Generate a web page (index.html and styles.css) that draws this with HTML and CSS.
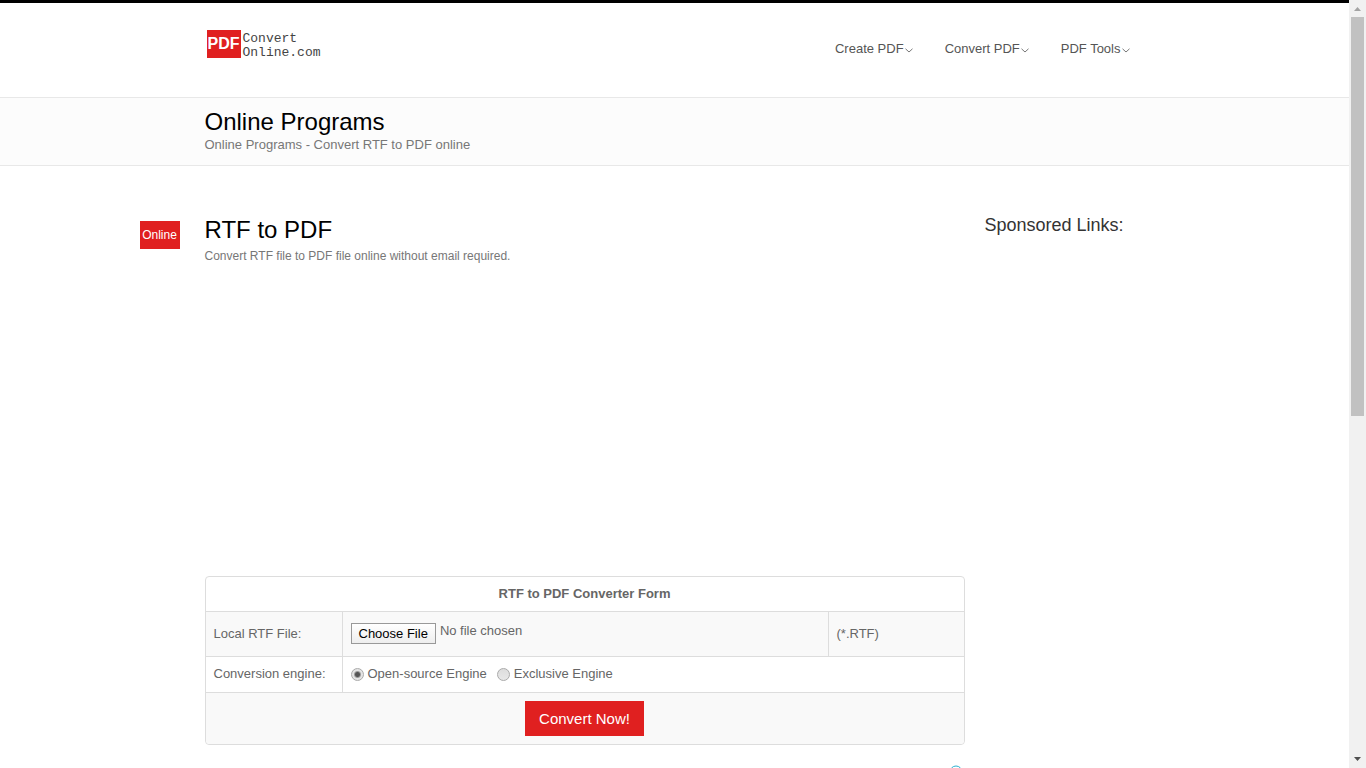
FILE: index.html
```
<!DOCTYPE html>
<html lang="en">
<head>
    <meta charset="UTF-8">
    <meta name="viewport" content="width=device-width, initial-scale=1.0">
    <title>RTF to PDF</title>
    <link rel="stylesheet" href="styles.css">
</head>
<body>
    <div class="page">
        <header class="header">
            <div class="container header-row">
                <a href="#" class="logo">
                    <span class="logo-mark">PDF</span>
                    <span class="logo-text">Convert<br>Online.com</span>
                </a>
                <nav class="nav">
                    <a href="#">Create PDF<svg class="chevron" viewBox="0 0 8 5"><path d="M0.5 0.8L4 4L7.5 0.8"/></svg></a>
                    <a href="#">Convert PDF<svg class="chevron" viewBox="0 0 8 5"><path d="M0.5 0.8L4 4L7.5 0.8"/></svg></a>
                    <a href="#">PDF Tools<svg class="chevron" viewBox="0 0 8 5"><path d="M0.5 0.8L4 4L7.5 0.8"/></svg></a>
                </nav>
            </div>
        </header>

        <div class="title-bar">
            <div class="container">
                <h1>Online Programs</h1>
                <p>Online Programs - Convert RTF to PDF online</p>
            </div>
        </div>

        <div class="container content">
            <main class="main">
                <div class="post-head">
                    <span class="badge">Online</span>
                    <div>
                        <h2>RTF to PDF</h2>
                        <p>Convert RTF file to PDF file online without email required.</p>
                    </div>
                </div>
                <div class="ad-space"></div>
                <form>
                    <table class="form-table">
                        <tr>
                            <th colspan="3">RTF to PDF Converter Form</th>
                        </tr>
                        <tr class="file-row">
                            <td class="col-label"><label for="file">Local RTF File:</label></td>
                            <td class="col-file"><input type="file" id="file" name="file" accept=".rtf"></td>
                            <td class="col-type">(*.RTF)</td>
                        </tr>
                        <tr class="engine-row">
                            <td>Conversion engine:</td>
                            <td colspan="2">
                                <div class="radios">
                                    <input type="radio" id="open" name="engine" value="open" checked>
                                    <label for="open">Open-source Engine</label>
                                    <input type="radio" id="exclusive" name="engine" value="exclusive">
                                    <label for="exclusive">Exclusive Engine</label>
                                </div>
                            </td>
                        </tr>
                        <tr>
                            <td colspan="3" class="submit-cell"><button type="button">Convert Now!</button></td>
                        </tr>
                    </table>
                </form>
                <div class="ad-mark">
                    <svg viewBox="0 0 14 14"><circle cx="7" cy="7" r="6"/><path d="M7 6v4M7 3.5v1"/></svg>
                </div>
            </main>
            <aside class="sidebar">
                <h3>Sponsored Links:</h3>
            </aside>
        </div>
    </div>

    <div class="scrollbar">
        <svg class="arrow up" viewBox="0 0 7 4"><path d="M0 4L3.5 0L7 4z"/></svg>
        <div class="track"><div class="thumb"></div></div>
        <svg class="arrow down" viewBox="0 0 7 4"><path d="M0 0L3.5 4L7 0z"/></svg>
    </div>
</body>
</html>
```

FILE: styles.css
```
* {
    box-sizing: border-box;
}
body {
    display: flex;
    height: 100vh;
    margin: 0;
    overflow: hidden;
    font-family: "Liberation Sans", Arial, sans-serif;
    font-size: 13px;
    line-height: 20px;
    color: #666;
    background-color: #fff;
}
h1, h2, h3, p {
    margin: 0;
    font-weight: normal;
}
a {
    color: #555;
    text-decoration: none;
}
.page {
    flex: 1;
    overflow: hidden;
    border-top: 3px solid #000;
}
.container {
    max-width: 940px;
    margin: 0 auto;
}

/* header */
.header-row {
    display: flex;
    justify-content: space-between;
    align-items: flex-start;
    height: 94px;
    padding-top: 27px;
}
.logo {
    display: flex;
    gap: 2px;
    padding-left: 2px;
}
.logo-mark {
    width: 34px;
    height: 28px;
    background-color: #e02020;
    color: #fff;
    font-size: 16px;
    font-weight: bold;
    line-height: 28px;
    text-align: center;
}
.logo-text {
    padding-top: 2px;
    font-family: "Liberation Mono", "Courier New", monospace;
    font-size: 13px;
    line-height: 14px;
    color: #444;
}
.nav {
    display: flex;
    gap: 32px;
    padding: 9px 15px 0 0;
}
.chevron {
    width: 8px;
    height: 5px;
    margin-left: 1px;
    vertical-align: 0;
    fill: none;
    stroke: #777;
}

/* title */
.title-bar {
    padding: 10px 0;
    background-color: #fcfcfc;
    border-top: 1px solid #e8e8e8;
    border-bottom: 1px solid #e8e8e8;
}
.title-bar h1 {
    font-size: 24px;
    line-height: 27px;
    color: #000;
}
.title-bar p {
    color: #777;
}

/* content */
.content {
    display: flex;
    gap: 20px;
    padding-top: 48px;
}
.main {
    flex: 1;
}
.post-head {
    display: flex;
    gap: 25px;
    margin-left: -65px;
}
.badge {
    width: 40px;
    height: 28px;
    margin-top: 7px;
    background-color: #e02020;
    color: #fff;
    font-size: 12px;
    line-height: 28px;
    text-align: center;
}
.post-head h2 {
    font-size: 24px;
    line-height: 32px;
    color: #000;
}
.post-head p {
    font-size: 12px;
    color: #777;
}
.ad-space {
    height: 310px;
}
.sidebar {
    width: 160px;
}
.sidebar h3 {
    font-size: 18px;
    line-height: 22px;
    color: #333;
}

/* form */
.form-table {
    width: 100%;
    border: 1px solid #ddd;
    border-radius: 4px;
    border-spacing: 0;
}
.form-table th, .form-table td {
    padding: 7px 8px;
    text-align: left;
}
.form-table th {
    text-align: center;
}
.form-table td {
    border-top: 1px solid #ddd;
}
.form-table td + td {
    border-left: 1px solid #ddd;
}
.form-table tr:nth-child(even) td {
    background-color: #f9f9f9;
}
.form-table .file-row td {
    height: 45px;
}
.form-table .col-file {
    padding-top: 6px;
    padding-bottom: 10px;
}
.form-table .engine-row td {
    height: 36px;
    padding-top: 6px;
    padding-bottom: 8px;
}
.col-label {
    width: 136px;
}
.col-type {
    width: 136px;
}
input[type="file"] {
    display: block;
    width: 100%;
    font: inherit;
    color: #666;
}
input[type="file"]::file-selector-button {
    height: 21px;
    margin: 0 4px 0 0;
    padding: 0 7px;
    border: 1px solid #999;
    border-radius: 0;
    background: linear-gradient(#fff, #eee);
    color: #000;
    font: inherit;
    line-height: 19px;
    vertical-align: -3px;
}
.radios {
    display: flex;
    align-items: center;
    height: 21px;
}
.radios label {
    margin-right: 10px;
}
input[type="radio"] {
    appearance: none;
    width: 13px;
    height: 13px;
    margin: 1px 4px 0 0;
    border: 1px solid #aaa;
    border-radius: 50%;
    background: linear-gradient(#ddd, #e8e8e8);
}
input[type="radio"]:checked {
    background: radial-gradient(circle, #555 2px, #e4e4e4 4px);
}
.form-table .submit-cell {
    padding: 8px;
    text-align: center;
    border-radius: 0 0 4px 4px;
}
button {
    display: block;
    height: 35px;
    margin: 0 auto;
    padding: 0 14px;
    border: none;
    background-color: #e02020;
    color: #fff;
    font: inherit;
    font-size: 15px;
    cursor: pointer;
}
.ad-mark {
    display: flex;
    justify-content: flex-end;
    padding: 20px 2px 0 0;
}
.ad-mark svg {
    width: 14px;
    height: 14px;
    fill: none;
    stroke: #2ab0d0;
}

/* scrollbar */
.scrollbar {
    display: flex;
    flex-direction: column;
    align-items: center;
    width: 17px;
    padding: 7px 0;
    background-color: #f1f1f1;
}
.arrow {
    width: 7px;
    height: 4px;
}
.up {
    fill: #a3a3a3;
}
.down {
    fill: #505050;
}
.track {
    flex: 1;
    padding: 6px 0;
}
.thumb {
    width: 13px;
    height: 54.4%;
    background-color: #c1c1c1;
}
```
